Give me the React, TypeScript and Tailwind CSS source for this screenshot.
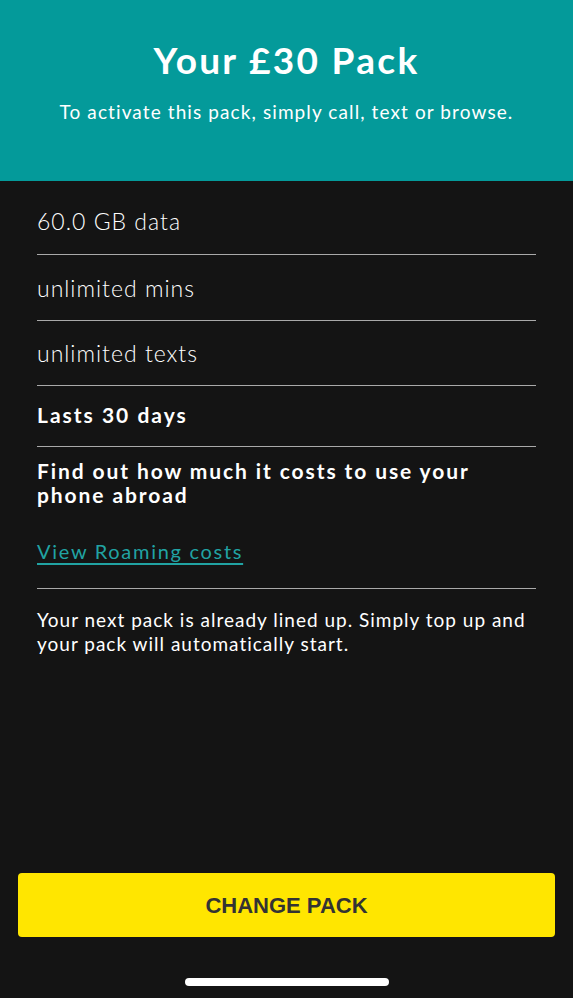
import React from "react";

const font = { fontFamily: "Lato, 'Open Sans', sans-serif" };

function Row({ children, className = "" }: { children: React.ReactNode; className?: string }) {
  return <div className={`border-b border-[#a9a9a9] ${className}`}>{children}</div>;
}

export default function App() {
  return (
    <div className="flex h-screen flex-col bg-[#141414] text-white" style={font}>
      {/* header */}
      <header className="flex h-[181px] shrink-0 flex-col items-center bg-[#049a9a] pt-[40px]">
        <h1 className="text-[37px] font-bold leading-[40px] tracking-[2.3px]">Your £30 Pack</h1>
        <p className="mt-[20px] text-[19px] leading-[24px] tracking-[1.1px]">
          To activate this pack, simply call, text or browse.
        </p>
      </header>

      <main className="px-[37px]">
        <Row className="pt-[25px] pb-[18px]">
          <div className="text-[23px] font-light leading-[30px] tracking-[1px]">60.0 GB data</div>
        </Row>
        <Row className="pt-[18px] pb-[17px]">
          <div className="text-[23px] font-light leading-[30px] tracking-[1px]">unlimited mins</div>
        </Row>
        <Row className="pt-[17px] pb-[17px]">
          <div className="text-[23px] font-light leading-[30px] tracking-[1px]">unlimited texts</div>
        </Row>
        <Row className="pt-[14px] pb-[16px]">
          <div className="text-[21px] font-bold leading-[30px] tracking-[2px]">Lasts 30 days</div>
        </Row>
        <Row className="pt-[12px] pb-[22px]">
          <div className="text-[21px] font-bold leading-[24px] tracking-[1.9px]">
            Find out how much it costs to use your phone abroad
          </div>
          <a
            href="#"
            className="mt-[29px] inline-block text-[20px] leading-[30px] tracking-[1.7px] text-[#21a3a3] underline underline-offset-[4px]"
          >
            View Roaming costs
          </a>
        </Row>
        <div className="pt-[19px]">
          <p className="text-[19px] leading-[24px] tracking-[1px]">
            Your next pack is already lined up. Simply top up and your pack will automatically start.
          </p>
        </div>
      </main>

      <div className="flex-1" />

      <div className="px-[18px]">
        <button
          className="flex h-[64px] w-full items-center justify-center rounded-[4px] bg-[#ffe600] text-[22px] font-bold text-[#333333]"
          style={{ fontFamily: "'Liberation Sans', Arial, sans-serif" }}
        >
          CHANGE PACK
        </button>
      </div>

      <div className="mb-[12px] mt-[41px] flex justify-center">
        <div className="h-[8px] w-[204px] rounded-full bg-white" />
      </div>
    </div>
  );
}
